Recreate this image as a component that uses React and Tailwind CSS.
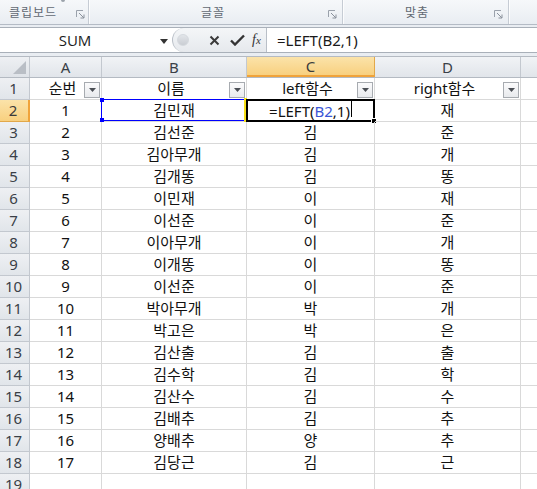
import React from "react";

const rows = [
  ["1", "김민재", null, "재"],
  ["2", "김선준", "김", "준"],
  ["3", "김아무개", "김", "개"],
  ["4", "김개똥", "김", "똥"],
  ["5", "이민재", "이", "재"],
  ["6", "이선준", "이", "준"],
  ["7", "이아무개", "이", "개"],
  ["8", "이개똥", "이", "똥"],
  ["9", "이선준", "이", "준"],
  ["10", "박아무개", "박", "개"],
  ["11", "박고은", "박", "은"],
  ["12", "김산출", "김", "출"],
  ["13", "김수학", "김", "학"],
  ["14", "김산수", "김", "수"],
  ["15", "김배추", "김", "추"],
  ["16", "양배추", "양", "추"],
  ["17", "김당근", "김", "근"],
];

const font = { fontFamily: '"Noto Sans", "Noto Sans CJK KR", sans-serif' };

const Launcher = () => (
  <svg width="9" height="9" viewBox="0 0 9 9" className="shrink-0">
    <path d="M0.5 7V0.5H7" fill="none" stroke="#9aa1ab" />
    <path d="M3 3L8 8M8 4.5V8H4.5" fill="none" stroke="#8a919b" />
  </svg>
);

const FilterBtn = () => (
  <div className="absolute right-[1px] top-[4px] w-[16px] h-[16px] border border-[#a7abb0] bg-gradient-to-b from-[#fbfbfc] to-[#e8eaed] flex items-center justify-center">
    <svg width="7" height="4" viewBox="0 0 7 4">
      <path d="M0 0H7L3.5 4Z" fill="#4b4f55" />
    </svg>
  </div>
);

const ColHead = ({ w, label, active }) => (
  <div
    className={`h-full flex items-center justify-center border-r text-[15px] ${
      active
        ? "bg-gradient-to-b from-[#fbe3a9] to-[#f8d07f] border-[#e2a84a] border-b-2 border-b-[#f0a33a] text-[#3b3b3b]"
        : "bg-gradient-to-b from-[#f1f3f6] to-[#e1e5ea] border-[#c3c8cf] text-[#3a3f47]"
    }`}
    style={{ width: w }}
  >
    {label}
  </div>
);

export default function App() {
  const widths = [30, 72, 145, 128, 146];
  return (
    <div className="w-[537px] h-[489px] overflow-hidden bg-[#e9edf2] text-black" style={font}>
      {/* ribbon */}
      <div className="h-[25px] flex bg-gradient-to-b from-[#f6f8fa] to-[#e9edf2] border-b border-[#b4bbc5] text-[12px] text-[#626973]">
        <div className="w-[88px] flex items-end pb-[2px] pl-[9px] pr-[3px] relative">
          <div className="absolute left-[61px] -top-[2px] w-[4px] h-[4px] rounded-full bg-[#9ba2ab]" />
          <span className="flex-1 tracking-[1px]">클립보드</span>
          <div className="mb-[3px]"><Launcher /></div>
        </div>
        <div className="w-[2px] border-l border-[#c6ccd4] bg-white/80" />
        <div className="w-[252px] flex items-end pb-[2px] pr-[5px]">
          <span className="flex-1 text-center pl-[8px] tracking-[1px]">글꼴</span>
          <div className="mb-[3px]"><Launcher /></div>
        </div>
        <div className="w-[2px] border-l border-[#c6ccd4] bg-white/80" />
        <div className="w-[164px] flex items-end pb-[2px] pr-[5px]">
          <span className="flex-1 text-center pr-[4px] tracking-[1px]">맞춤</span>
          <div className="mb-[3px]"><Launcher /></div>
        </div>
        <div className="w-[2px] border-l border-[#c6ccd4] bg-white/80" />
        <div className="flex-1" />
      </div>

      {/* formula bar */}
      <div className="mt-[2px] h-[26px] flex bg-white border-y border-[#a9b0b9]">
        <div className="w-[172px] flex items-center relative">
          <span className="flex-1 text-center text-[15px] pr-[22px] text-[#1c1c1c]" style={{ fontFamily: '"Open Sans", "Noto Sans", sans-serif' }}>SUM</span>
          <svg width="8" height="5" viewBox="0 0 8 5" className="absolute left-[160px] top-[11px]">
            <path d="M0 0H8L4 5Z" fill="#333" />
          </svg>
        </div>
        <div className="w-[94px] h-full flex items-center bg-gradient-to-b from-[#f4f6f8] to-[#e6e9ed] rounded-l-[12px] border-l border-[#b9bfc7] relative">
          <div className="ml-[4px] w-[12px] h-[12px] rounded-full bg-gradient-to-b from-[#e2e5e9] to-[#c9cdd3] border border-[#d5d9de]" />
          <svg width="11" height="11" viewBox="0 0 11 11" className="ml-[20px]">
            <path d="M1.5 1.5L9.5 9.5M9.5 1.5L1.5 9.5" stroke="#3a3a3a" strokeWidth="2" />
          </svg>
          <svg width="15" height="12" viewBox="0 0 15 12" className="ml-[10px]">
            <path d="M1 6.5L5 10.5L14 1.5" fill="none" stroke="#333" strokeWidth="2.4" />
          </svg>
          <span className="ml-[7px] italic text-[14px] text-[#333] leading-none" style={{ fontFamily: '"Liberation Serif", serif' }}>
            f<span className="text-[11px]">x</span>
          </span>
        </div>
        <div className="w-[1px] h-full bg-[#b9bfc7]" />
        <div className="flex-1 flex items-center pl-[10px] text-[15px] text-[#1a1a1a]">=LEFT(B2,1)</div>
      </div>

      {/* grid */}
      <div className="mt-[3px] bg-white text-[15px]">
        <div className="h-[22px] flex border-y border-[#b4bac2]">
          <div className="w-[30px] h-full bg-gradient-to-b from-[#eef0f3] to-[#dfe3e8] border-r border-[#c3c8cf] relative">
            <svg width="13" height="13" viewBox="0 0 13 13" className="absolute right-[3px] bottom-[3px]">
              <path d="M13 0V13H0Z" fill="#b9bec5" />
            </svg>
          </div>
          <ColHead w={72} label="A" />
          <ColHead w={145} label="B" />
          <ColHead w={128} label="C" active />
          <ColHead w={146} label="D" />
          <div className="flex-1 h-full bg-gradient-to-b from-[#f1f3f6] to-[#e1e5ea]" />
        </div>

        <Row num="1" header>
          <Cell w={widths[1]} filter>순번</Cell>
          <Cell w={widths[2]} filter>이름</Cell>
          <Cell w={widths[3]} filter>left함수</Cell>
          <Cell w={widths[4]} filter>right함수</Cell>
        </Row>

        {rows.map((r, i) => (
          <Row key={i} num={String(i + 2)} active={i === 0}>
            <Cell w={widths[1]}>{r[0]}</Cell>
            <Cell w={widths[2]}>
              {r[1]}
              {i === 0 && (
                <div className="absolute -left-[1px] -top-[1px] w-[145px] h-[22px] border border-[#0000ff] pointer-events-none">
                  <div className="absolute -left-[2px] -top-[2px] w-[4px] h-[4px] bg-[#0000ff]" />
                  <div className="absolute -left-[2px] -bottom-[2px] w-[4px] h-[4px] bg-[#0000ff]" />
                  <div className="absolute -right-[2px] -top-[2px] w-[3px] h-[4px] bg-[#f7e01a]" />
                  <div className="absolute -right-[2px] -bottom-[2px] w-[3px] h-[4px] bg-[#f7e01a]" />
                  <div className="absolute -right-[1px] top-0 w-[2px] h-full bg-[#f7e01a]" />
                </div>
              )}
            </Cell>
            <Cell w={widths[3]}>
              {r[2] === null ? (
                <>
                  <span>
                    =LEFT(<span className="text-[#3a56d6]">B2</span>,1)
                  </span>
                  <span className="inline-block w-[1px] h-[18px] bg-black ml-[1px]" />
                  <div className="absolute -left-[1px] -top-[1px] w-[129px] h-[23px] border-2 border-black pointer-events-none">
                    <div className="absolute -right-[4px] -bottom-[4px] w-[6px] h-[6px] bg-black border border-white" />
                  </div>
                </>
              ) : (
                r[2]
              )}
            </Cell>
            <Cell w={widths[4]}>{r[3]}</Cell>
          </Row>
        ))}
        <Row num="19">
          <Cell w={widths[1]} />
          <Cell w={widths[2]} />
          <Cell w={widths[3]} />
          <Cell w={widths[4]} />
        </Row>
      </div>
    </div>
  );
}

function Row({ num, active, children }) {
  return (
    <div className="h-[22px] flex">
      <div
        className={`w-[30px] h-full flex items-center justify-center pr-[2px] text-[15px] border-r border-b ${
          active
            ? "bg-gradient-to-b from-[#fbe3a9] to-[#f8d07f] border-[#e2a84a] border-r-2 border-r-[#f0a33a] text-[#3b3b3b]"
            : "bg-gradient-to-b from-[#eef0f3] to-[#e1e5ea] border-[#c3c8cf] text-[#3a3f47]"
        }`}
      >
        {num}
      </div>
      {children}
      <div className="flex-1 h-full border-b border-[#d9d9d9]" />
    </div>
  );
}

function Cell({ w, filter, children }) {
  return (
    <div
      className="relative h-full flex items-center justify-center border-r border-b border-[#d9d9d9] text-[15px] text-[#111]"
      style={{ width: w }}
    >
      <span className={filter ? "pr-[6px]" : ""}>{children}</span>
      {filter && <FilterBtn />}
    </div>
  );
}
